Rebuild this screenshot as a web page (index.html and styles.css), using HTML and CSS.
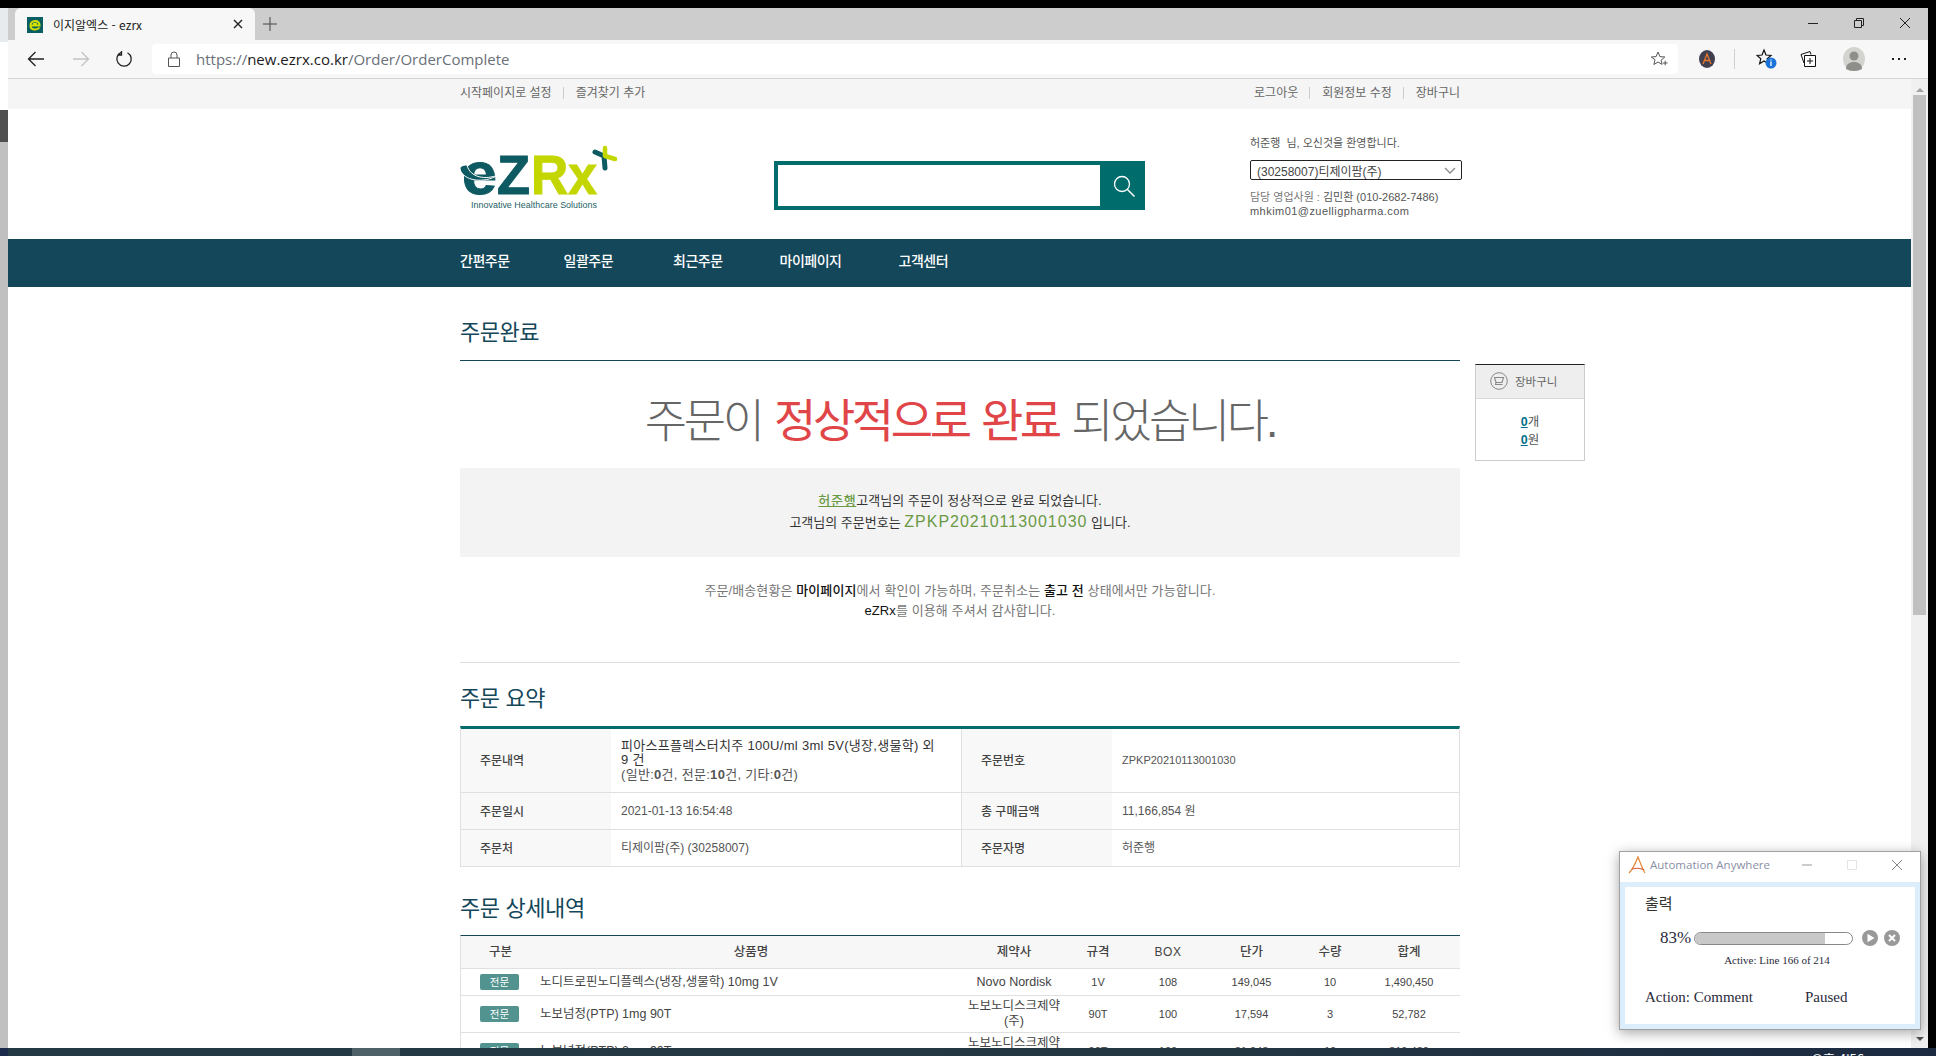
FILE: index.html
```html
<!DOCTYPE html>
<html lang="ko">
<head>
    <meta charset="UTF-8">
    <title>이지알엑스 - ezrx</title>
    <link rel="stylesheet" href="styles.css">
</head>
<body>
    <div class="screen">
        <div class="left-strip">
            <div class="strip-a"></div>
            <div class="strip-b"></div>
            <div class="strip-c"></div>
            <div class="strip-d"></div>
        </div>

        <div class="browser">
            <!-- Tabs -->
            <div class="tabbar">
                <div class="tab">
                    <svg class="favicon" width="16" height="16" viewBox="0 0 16 16">
                        <rect width="16" height="16" fill="#0b5f63"/>
                        <path d="M3 8.500h9.500C12.500 5.500 10.500 4 8 4S3.500 6 3.500 8.500 5.500 12.500 8 12.500c2 0 3.500-.7 4.500-2M6 6.800h4" fill="none" stroke="#d6e000" stroke-width="2"/>
                    </svg>
                    <span class="tab-title">이지알엑스 - ezrx</span>
                    <svg class="tab-x" width="10" height="10" viewBox="0 0 10 10">
                        <path d="M1 1l8 8M9 1l-8 8" stroke="#222" stroke-width="1.400"/>
                    </svg>
                </div>
                <svg class="tab-plus" width="14" height="14" viewBox="0 0 14 14">
                    <path d="M7 0v14M0 7h14" stroke="#444" stroke-width="1"/>
                </svg>
                <div class="win-controls">
                    <svg width="12" height="12" viewBox="0 0 12 12"><path d="M1 6.500h10" stroke="#222"/></svg>
                    <svg width="12" height="12" viewBox="0 0 12 12" fill="none"><path d="M1.500 3.500h7v7h-7zM3.500 3.500v-2h7v7h-2" stroke="#222"/></svg>
                    <svg width="12" height="12" viewBox="0 0 12 12"><path d="M1 1l10 10M11 1L1 11" stroke="#222"/></svg>
                </div>
            </div>

            <!-- Toolbar -->
            <div class="toolbar">
                <svg class="tb-back" width="18" height="16" viewBox="0 0 18 16" fill="none"><path d="M17 8H1.500M8.500 1L1.500 8l7 7" stroke="#222" stroke-width="1.300"/></svg>
                <svg class="tb-forward" width="18" height="16" viewBox="0 0 18 16" fill="none"><path d="M1 8h15.500M9.500 1l7 7-7 7" stroke="#c4c4c4" stroke-width="1.300"/></svg>
                <svg class="tb-reload" width="18" height="18" viewBox="0 0 18 18" fill="none"><path d="M6.200 2.400A7.200 7.200 0 1 0 12.500 2.700M6.500 1v4H2.600" stroke="#222" stroke-width="1.300"/></svg>
                <div class="address">
                    <svg width="12" height="16" viewBox="0 0 12 16" fill="none"><path d="M.5 7h11v8.500H.5zM3 7V4a3 3 0 0 1 6 0v3" stroke="#555" stroke-width="1"/></svg>
                    <span class="url"><span class="url-scheme">https://</span><span class="url-host">new.ezrx.co.kr</span>/Order/OrderComplete</span>
                    <svg class="addr-star" width="18" height="18" viewBox="0 0 18 18" fill="none"><path d="M8 2l1.900 4.600 4.900.4-3.700 3.200 1 4.200L8 12l-4.100 2.500 1.100-4.800L1.300 7l4.800-.4zM13 13h4.500M15.200 10.800v4.500" stroke="#555" stroke-width="1"/></svg>
                </div>
                <svg class="tb-aa" width="16" height="18" viewBox="0 0 16 18"><ellipse cx="8" cy="9" rx="8" ry="9" fill="#3f3f50"/><path d="M4 14L8 4l4 10M5.500 10.500h5" stroke="#e8762c" stroke-width="1.300" fill="none"/></svg>
                <div class="tb-sep"></div>
                <svg class="tb-fav" width="22" height="22" viewBox="0 0 22 22"><path d="M8 2l2 5 5 .4-3.800 3.300 1.200 5L8 13l-4.400 2.700 1.200-5L1 7.400 6 7z" fill="none" stroke="#111" stroke-width="1.200"/><circle cx="15" cy="15" r="5.500" fill="#1a73d9"/><path d="M15 13.500v4.500M15 11.500v1" stroke="#fff" stroke-width="1.300"/></svg>
                <svg class="tb-coll" width="18" height="18" viewBox="0 0 18 18" fill="none"><path d="M5 13L2 4.500 11 1.500l1 3" stroke="#111"/><path d="M5.500 5.500h11v11h-11zM11 8v6M8 11h6" stroke="#111" fill="#fff"/></svg>
                <svg class="tb-avatar" width="22" height="24" viewBox="0 0 22 24"><ellipse cx="11" cy="12" rx="11" ry="12" fill="#d3d3d0"/><circle cx="11" cy="9" r="4.500" fill="#8e8e8b"/><path d="M3 22c0-5 3.500-7 8-7s8 2 8 7c-2 1.300-5 2-8 2s-6-.7-8-2z" fill="#8e8e8b"/></svg>
                <div class="tb-more"><i></i><i></i><i></i></div>
            </div>

            <div class="viewport">
                <div class="page">
                    <div class="top-links">
                        <div class="wrap top-links-inner">
                            <div class="link-group">
                                <a>시작페이지로 설정</a><a>즐겨찾기 추가</a>
                            </div>
                            <div class="link-group">
                                <a>로그아웃</a><a>회원정보 수정</a><a>장바구니</a>
                            </div>
                        </div>
                    </div>

                    <header class="wrap site-header">
                        <svg class="logo" width="160" height="70" viewBox="0 0 160 70">
                            <text x="2" y="49" class="logo-e" textLength="35" lengthAdjust="spacingAndGlyphs">e</text>
                            <path d="M0 24C3 36 24 39 38 30 26 35 10 33 7 20 3 20 0 21 0 24z" fill="#0e5a62" stroke="#fff" stroke-width="1"/>
                            <text x="37" y="49" class="logo-z" textLength="33" lengthAdjust="spacingAndGlyphs">Z</text>
                            <text x="71" y="49" class="logo-rx" textLength="66" lengthAdjust="spacingAndGlyphs">Rx</text>
                            <path d="M135 7l9 4 1 12" fill="none" stroke="#0e5a62" stroke-width="5" stroke-linecap="round" stroke-linejoin="round"/>
                            <path d="M145 3v8l10 3" fill="none" stroke="#c4d600" stroke-width="4.500" stroke-linecap="round" stroke-linejoin="round"/>
                            <text x="11" y="63" class="logo-tag" textLength="126" lengthAdjust="spacingAndGlyphs">Innovative Healthcare Solutions</text>
                        </svg>
                        <form class="search">
                            <input class="search-input" type="text">
                            <button class="search-btn" type="button">
                                <svg width="24" height="24" viewBox="0 0 24 24" fill="none"><circle cx="10" cy="10" r="7.500" stroke="#fff" stroke-width="1.300"/><path d="M15.500 15.500l7 7" stroke="#fff" stroke-width="1.500"/></svg>
                            </button>
                        </form>
                        <div class="user-info">
                            <p class="welcome">허준행 &nbsp;님, 오신것을 환영합니다.</p>
                            <div class="account-select">
                                <span>(30258007)티제이팜(주)</span>
                                <svg width="12" height="7" viewBox="0 0 12 7" fill="none"><path d="M1 1l5 5 5-5" stroke="#888" stroke-width="1.300"/></svg>
                            </div>
                            <p class="rep"><b>담당 영업사원 :</b> 김민환 (010-2682-7486)</p>
                            <p class="rep-mail">mhkim01@zuelligpharma.com</p>
                        </div>
                    </header>

                    <nav class="gnb">
                        <div class="wrap gnb-inner">
                            <a>간편주문</a><a>일괄주문</a><a>최근주문</a><a>마이페이지</a><a>고객센터</a>
                        </div>
                    </nav>

                    <div class="wrap content">
                        <main class="main-col">
                            <h1 class="page-title">주문완료</h1>
                            <p class="big-msg">주문이 <em>정상적으로 완료</em> 되었습니다.</p>
                            <div class="done-box">
                                <p><a class="name-link">허준행</a>고객님의 주문이 정상적으로 완료 되었습니다.</p>
                                <p>고객님의 주문번호는 <span class="order-no">ZPKP20210113001030</span> 입니다.</p>
                            </div>
                            <div class="note">
                                <p>주문/배송현황은 <b>마이페이지</b>에서 확인이 가능하며, 주문취소는 <b>출고 전</b> 상태에서만 가능합니다.</p>
                                <p><b>eZRx</b>를 이용해 주셔서 감사합니다.</p>
                            </div>

                            <h2 class="section-title">주문 요약</h2>
                            <table class="summary">
                                <colgroup><col class="c-label"><col class="c-val"><col class="c-label"><col></colgroup>
                                <tr class="row-tall">
                                    <th>주문내역</th>
                                    <td class="order-items"><span class="dark">피아스프플렉스터치주 100U/ml 3ml 5V(냉장,생물학) 외 9&nbsp;건</span><br>(일반:<b>0</b>건, 전문:<b>10</b>건, 기타:<b>0</b>건)</td>
                                    <th>주문번호</th>
                                    <td class="code">ZPKP20210113001030</td>
                                </tr>
                                <tr>
                                    <th>주문일시</th>
                                    <td>2021-01-13 16:54:48</td>
                                    <th>총 구매금액</th>
                                    <td>11,166,854 원</td>
                                </tr>
                                <tr>
                                    <th>주문처</th>
                                    <td>티제이팜(주) (30258007)</td>
                                    <th>주문자명</th>
                                    <td>허준행</td>
                                </tr>
                            </table>

                            <h2 class="section-title detail-title">주문 상세내역</h2>
                            <table class="detail">
                                <colgroup>
                                    <col class="d1"><col class="d2"><col class="d3"><col class="d4">
                                    <col class="d5"><col class="d6"><col class="d7"><col>
                                </colgroup>
                                <tr class="detail-head">
                                    <th>구분</th><th>상품명</th><th>제약사</th><th>규격</th>
                                    <th class="box-head">BOX</th><th>단가</th><th>수량</th><th>합계</th>
                                </tr>
                                <tr class="row-one">
                                    <td><span class="badge">전문</span></td>
                                    <td class="product">노디트로핀노디플렉스(냉장,생물학) 10mg 1V</td>
                                    <td class="maker">Novo Nordisk</td><td>1V</td><td>108</td><td>149,045</td><td>10</td><td>1,490,450</td>
                                </tr>
                                <tr class="row-two">
                                    <td><span class="badge">전문</span></td>
                                    <td class="product">노보넘정(PTP) 1mg 90T</td>
                                    <td class="maker">노보노디스크제약(주)</td><td>90T</td><td>100</td><td>17,594</td><td>3</td><td>52,782</td>
                                </tr>
                                <tr class="row-two">
                                    <td><span class="badge">전문</span></td>
                                    <td class="product">노보넘정(PTP) 2mg 90T</td>
                                    <td class="maker">노보노디스크제약(주)</td><td>90T</td><td>100</td><td>31,948</td><td>10</td><td>319,480</td>
                                </tr>
                            </table>
                        </main>

                        <aside class="cart">
                            <div class="cart-head">
                                <svg width="18" height="18" viewBox="0 0 18 18" fill="none"><circle cx="9" cy="9" r="8.300" stroke="#888"/><path d="M4.500 5.500h9l-1.500 5H6zM6 10.500l-.5 2h7" stroke="#888" stroke-width="1.100"/></svg>
                                <span>장바구니</span>
                            </div>
                            <div class="cart-body">
                                <p><a>0</a>개</p>
                                <p><a>0</a>원</p>
                            </div>
                        </aside>
                    </div>
                </div>

                <div class="scrollbar">
                    <div class="sb-arrow-up"></div>
                    <div class="sb-thumb"></div>
                    <div class="sb-arrow-down"></div>
                </div>
            </div>
        </div>
    </div>

    <div class="taskbar">
        <div class="tb-corner"></div>
        <div class="tb-active"></div>
        <div class="tb-clock">오후 4:56</div>
    </div>

    <!-- Automation Anywhere window, floats over the browser -->
    <div class="aa-window">
        <div class="aa-title">
            <svg width="20" height="18" viewBox="0 0 20 18" fill="none"><path d="M1 17C5 13 8 6 10 1c2 5 4 11 7 16" stroke="#e58a3a" stroke-width="1.300"/><path d="M4 13c4-1 9-1 12 1" stroke="#e0573a" stroke-width="1.100"/></svg>
            <span class="aa-name">Automation Anywhere</span>
            <div class="aa-controls">
                <svg width="12" height="12" viewBox="0 0 12 12"><path d="M1 6h10" stroke="#999"/></svg>
                <svg width="12" height="12" viewBox="0 0 12 12" fill="none"><path d="M1.500 1.500h9v9h-9z" stroke="#e4e4e4"/></svg>
                <svg width="12" height="12" viewBox="0 0 12 12"><path d="M1 1l10 10M11 1L1 11" stroke="#888"/></svg>
            </div>
        </div>
        <div class="aa-frame">
            <div class="aa-body">
                <p class="aa-job">출력</p>
                <div class="aa-progress-row">
                    <span class="aa-pct">83%</span>
                    <div class="aa-bar"><div class="aa-fill" style="width: 83%"></div></div>
                    <svg width="16" height="16" viewBox="0 0 16 16"><circle cx="8" cy="8" r="8" fill="#999"/><path d="M5.500 3.800l7 4.200-7 4.200z" fill="#fff"/></svg>
                    <svg width="16" height="16" viewBox="0 0 16 16"><circle cx="8" cy="8" r="8" fill="#999"/><path d="M5 5l6 6M11 5l-6 6" stroke="#fff" stroke-width="2"/></svg>
                </div>
                <p class="aa-line">Active: Line 166 of 214</p>
                <div class="aa-status">
                    <span class="aa-action">Action: Comment</span>
                    <span>Paused</span>
                </div>
            </div>
        </div>
    </div>
</body>
</html>
```

FILE: styles.css
```css
html, body {
    margin: 0;
    padding: 0;
    height: 1056px;
    overflow: hidden;
    background-color: #000;
}

body {
    font-family: "Liberation Sans", "Noto Sans CJK KR", sans-serif;
    font-size: 12px;
    color: #444;
    position: relative;
}

p, h1, h2 {
    margin: 0;
    font-weight: normal;
}

.screen {
    display: flex;
    height: 1040px;
    padding: 8px 8px 0 0;
}

/* Window behind the browser, only a thin strip shows */
.left-strip {
    width: 8px;
    display: flex;
    flex-direction: column;
    flex-shrink: 0;
}

.strip-a { height: 34px; background-color: #e8ebee; }
.strip-b { height: 68px; background-color: #fff; }
.strip-c { height: 32px; background-color: #505050; }
.strip-d { flex-grow: 1; background-color: #c0c0c0; }

.browser {
    flex-grow: 1;
    min-width: 0;
    display: flex;
    flex-direction: column;
    background-color: #fff;
}

/* Tabs */
.tabbar {
    height: 32px;
    display: flex;
    align-items: center;
    background-color: #cdcdcd;
    flex-shrink: 0;
}

.tab {
    width: 240px;
    height: 32px;
    margin-left: 7px;
    padding: 0 12px;
    box-sizing: border-box;
    display: flex;
    align-items: center;
    background-color: #f7f7f7;
    border-radius: 6px 6px 0 0;
}

.favicon {
    margin-top: 1px;
}

.tab-title {
    margin-left: 10px;
    font-family: "Noto Sans CJK KR", sans-serif;
    font-size: 12px;
    color: #222;
    flex-grow: 1;
}

.tab-plus {
    margin-left: 8px;
}

.win-controls {
    margin-left: auto;
    display: flex;
    gap: 34px;
    padding: 0 17px 2px 0;
}

/* Toolbar */
.toolbar {
    height: 38px;
    display: flex;
    align-items: center;
    background-color: #f7f7f7;
    border-bottom: 1px solid #d5d5d5;
    flex-shrink: 0;
}

.tb-back { margin-left: 19px; }
.tb-forward { margin-left: 27px; }
.tb-reload { margin-left: 25px; }

.address {
    width: 1526px;
    height: 30px;
    margin-left: 19px;
    padding: 0 10px 0 16px;
    box-sizing: border-box;
    display: flex;
    align-items: center;
    background-color: #fff;
    border-radius: 4px;
}

.url {
    margin-left: 16px;
    font-family: "Open Sans", sans-serif;
    font-size: 15px;
    color: #6a7078;
    flex-grow: 1;
}

.url-host { color: #1c1c1c; }

.tb-aa { margin-left: 21px; }

.tb-sep {
    width: 1px;
    height: 20px;
    margin-left: 19px;
    background-color: #d0d0d0;
}

.tb-fav { margin-left: 21px; }
.tb-coll { margin-left: 21px; }
.tb-avatar { margin-left: 26px; }

.tb-more {
    display: flex;
    gap: 4px;
    margin-left: 27px;
}

.tb-more i {
    width: 2px;
    height: 2px;
    background-color: #222;
}

/* Page */
.viewport {
    flex-grow: 1;
    display: flex;
    min-height: 0;
    background-color: #fff;
}

.page {
    flex-grow: 1;
    min-width: 0;
    overflow: hidden;
}

.wrap {
    width: 1000px;
    margin-left: 452px;
}

.top-links {
    height: 30px;
    background-color: #f5f5f5;
}

.top-links-inner {
    height: 100%;
    padding-bottom: 2px;
    box-sizing: border-box;
    display: flex;
    justify-content: space-between;
    align-items: center;
}

.link-group {
    display: flex;
    align-items: center;
}

.link-group a {
    font-size: 12px;
    line-height: 12px;
    color: #666;
}

.link-group a + a {
    margin-left: 11px;
    padding-left: 12px;
    border-left: 1px solid #ccc;
}

.site-header {
    height: 130px;
    display: grid;
    grid-template-columns: 314px 476px 212px;
    box-sizing: border-box;
}

.logo {
    margin-top: 36px;
}

.logo-e {
    font: bold 60px "Liberation Sans", sans-serif;
    fill: #0e5a62;
    stroke: #0e5a62;
    stroke-width: 1;
}

.logo-z {
    font: bold 56px "Liberation Sans", sans-serif;
    fill: #0e5a62;
    stroke: #0e5a62;
    stroke-width: 1;
}

.logo-rx {
    font: bold 56px "Liberation Sans", sans-serif;
    fill: #c4d600;
    stroke: #c4d600;
    stroke-width: 1;
}

.logo-tag {
    font: 9px "Liberation Sans", sans-serif;
    fill: #1f5f66;
}

.search {
    width: 371px;
    height: 49px;
    margin-top: 52px;
    box-sizing: border-box;
    display: flex;
    border: 4px solid #006c6c;
}

.search-input {
    flex-grow: 1;
    min-width: 0;
    border: 0;
    padding: 0;
    background-color: #fff;
}

.search-btn {
    width: 41px;
    padding: 0 0 0 6px;
    border: 0;
    display: flex;
    align-items: center;
    justify-content: center;
    background-color: #006c6c;
}

.user-info {
    padding-top: 26px;
    font-size: 11px;
    color: #555;
}

.welcome {
    line-height: 16px;
}

.account-select {
    height: 20px;
    margin-top: 9px;
    padding: 0 5px 0 6px;
    box-sizing: border-box;
    display: flex;
    align-items: center;
    justify-content: space-between;
    border: 1px solid #222;
    border-radius: 2px;
    font-size: 12px;
    color: #444;
}

.rep {
    margin-top: 10px;
    line-height: 14px;
}

.rep b {
    color: #777;
    font-weight: normal;
}

.rep-mail {
    line-height: 14px;
    letter-spacing: 0.450px;
}

/* Menu */
.gnb {
    height: 48px;
    background-color: #14475a;
}

.gnb-inner {
    height: 100%;
    padding-bottom: 7px;
    box-sizing: border-box;
    display: flex;
    align-items: center;
    gap: 57px;
}

.gnb a {
    font-size: 14px;
    font-weight: 500;
    color: #fff;
    letter-spacing: -0.500px;
}

.gnb a:nth-child(2) {
    margin: 0 3px 0 -3px;
}

/* Content */
.content {
    display: flex;
    align-items: flex-start;
    width: 1125px;
}

.main-col {
    width: 1000px;
    flex-shrink: 0;
}

.page-title {
    padding: 31px 0 12px;
    font-size: 22px;
    line-height: 30px;
    letter-spacing: -0.500px;
    color: #14475a;
    border-bottom: 1px solid #14475a;
}

.big-msg {
    padding: 31px 0 18px;
    font-size: 46px;
    line-height: 58px;
    letter-spacing: -3.400px;
    word-spacing: 3px;
    font-weight: 300;
    color: #666;
    text-align: center;
}

.big-msg em {
    font-style: normal;
    font-weight: 400;
    color: #e04548;
}

.done-box {
    height: 89px;
    padding-top: 22px;
    box-sizing: border-box;
    background-color: #f3f3f3;
    text-align: center;
    font-size: 13px;
    line-height: 21px;
    color: #333;
}

.name-link {
    color: #6a9a45;
    font-weight: 500;
    letter-spacing: 0.700px;
    text-decoration: underline;
}

.order-no {
    font-family: "Liberation Sans", sans-serif;
    font-size: 16px;
    letter-spacing: 1px;
    color: #6a9a45;
}

.note {
    margin-top: 24px;
    padding-bottom: 41px;
    border-bottom: 1px solid #ddd;
    text-align: center;
    font-size: 13px;
    letter-spacing: 0.100px;
    line-height: 20px;
    color: #777;
}

.note b {
    font-weight: 500;
    color: #111;
}

.section-title {
    padding: 21px 0 12px;
    font-size: 22px;
    line-height: 30px;
    letter-spacing: -0.400px;
    color: #14475a;
}

.detail-title {
    padding: 27px 0 11px;
}

/* Summary table */
.summary {
    width: 1000px;
    table-layout: fixed;
    border-collapse: separate;
    border-spacing: 0;
    border-top: 3px solid #006c6c;
    border-left: 1px solid #e0e0e0;
    border-right: 1px solid #e0e0e0;
    font-size: 12px;
}

.c-label { width: 150px; }
.c-val { width: 351px; }

.summary th {
    height: 37px;
    padding: 0 0 2px 19px;
    box-sizing: border-box;
    text-align: left;
    font-weight: 500;
    color: #444;
    background-color: #f8f8f8;
    border-bottom: 1px solid #e0e0e0;
}

.summary td {
    padding: 0 6px 0 10px;
    color: #555;
    border-bottom: 1px solid #e0e0e0;
    line-height: 15px;
}

.summary td:nth-child(2) {
    border-right: 1px solid #e0e0e0;
}

.summary .row-tall th {
    height: 64px;
}

.summary .order-items {
    font-size: 13px;
    letter-spacing: 0.300px;
    line-height: 14.500px;
}

.summary .code {
    font-size: 11px;
}

.dark {
    color: #333;
}

.summary b {
    font-weight: 700;
}

/* Detail table */
.detail {
    width: 1000px;
    table-layout: fixed;
    border-collapse: separate;
    border-spacing: 0;
    border-top: 1px solid #14475a;
    border-left: 1px solid #e0e0e0;
    font-size: 11px;
    color: #444;
    text-align: center;
}

.d1 { width: 79px; }
.d2 { width: 422px; }
.d3 { width: 104px; }
.d4 { width: 64px; }
.d5 { width: 76px; }
.d6 { width: 91px; }
.d7 { width: 66px; }

.detail th {
    font-size: 12.500px;
    font-weight: 500;
    background-color: #f7f7f7;
}

.detail .box-head {
    font-size: 12px;
    letter-spacing: 0.500px;
}

.detail th, .detail td {
    padding: 0;
    border-bottom: 1px solid #e0e0e0;
    line-height: 15px;
}

.detail th:last-child, .detail td:last-child {
    padding-right: 5px;
}

.detail-head th {
    height: 32px;
}

.row-one td {
    height: 26px;
}

.row-two td {
    height: 36px;
}

.detail .product {
    font-size: 12.500px;
    text-align: left;
}

.detail .maker {
    font-size: 12.500px;
}

.badge {
    display: block;
    width: 39px;
    height: 16px;
    margin-left: 19px;
    border-radius: 2px;
    background-color: #52938f;
    color: #fff;
    font-size: 10.500px;
    line-height: 16px;
}

/* Cart */
.cart {
    width: 110px;
    margin: 77px 0 0 15px;
    box-sizing: border-box;
    border: 1px solid #ccc;
    border-top-color: #222;
    flex-shrink: 0;
}

.cart-head {
    height: 31px;
    padding: 0 0 2px 14px;
    display: flex;
    align-items: center;
    gap: 7px;
    background-color: #eee;
    border-bottom: 1px solid #d8d8d8;
    font-size: 11.500px;
    color: #666;
}

.cart-body {
    height: 61px;
    padding-top: 14px;
    box-sizing: border-box;
    text-align: center;
    font-size: 12.500px;
    line-height: 18px;
    color: #555;
}

.cart-body a {
    color: #00708a;
    font-weight: 700;
    text-decoration: underline;
}

/* Scrollbar */
.scrollbar {
    width: 17px;
    flex-shrink: 0;
    display: flex;
    flex-direction: column;
    align-items: center;
    background-color: #f0f0f0;
}

.sb-arrow-up {
    margin-top: 9px;
    border-left: 4px solid transparent;
    border-right: 4px solid transparent;
    border-bottom: 4px solid #a0a0a0;
}

.sb-thumb {
    width: 13px;
    height: 520px;
    margin-top: 3px;
    background-color: #c0c0c0;
}

.sb-arrow-down {
    margin-top: auto;
    margin-bottom: 7px;
    border-left: 4px solid transparent;
    border-right: 4px solid transparent;
    border-top: 4px solid #505050;
}

/* Taskbar */
.taskbar {
    height: 8px;
    display: flex;
    overflow: hidden;
    background: linear-gradient(90deg, #233a44 0%, #233742 60%, #1c2a41 100%);
}

.tb-corner {
    width: 8px;
    background-color: #1b2a4a;
}

.tb-active {
    width: 48px;
    margin-left: 344px;
    background-color: #4f6168;
}

.tb-clock {
    margin-left: auto;
    margin-right: 72px;
    padding-top: 3px;
    font-family: "Noto Sans CJK KR", sans-serif;
    font-size: 13px;
    line-height: 16px;
    color: #fff;
}

/* Automation Anywhere window */
.aa-window {
    position: absolute;
    left: 1619px;
    top: 851px;
    width: 302px;
    height: 179px;
    box-sizing: border-box;
    display: flex;
    flex-direction: column;
    background-color: #fff;
    border: 1px solid #a0a0a0;
    box-shadow: 0 3px 12px rgba(0, 0, 0, 0.35);
}

.aa-title {
    height: 30px;
    padding: 0 0 5px 8px;
    box-sizing: border-box;
    display: flex;
    align-items: center;
    flex-shrink: 0;
}

.aa-name {
    margin-left: 2px;
    font-family: "Open Sans", sans-serif;
    font-size: 11.500px;
    color: #8a8fa5;
}

.aa-controls {
    margin-left: auto;
    padding-right: 17px;
    display: flex;
    gap: 33px;
}

.aa-frame {
    flex-grow: 1;
    padding: 5px;
    background-color: #dcedfb;
}

.aa-body {
    height: 100%;
    box-sizing: border-box;
    padding: 6px 0 0 20px;
    background-color: #fff;
    font-family: "Liberation Serif", "Noto Sans CJK KR", serif;
    color: #2a2a3a;
}

.aa-job {
    font-family: "Noto Sans CJK KR", sans-serif;
    font-size: 15px;
    line-height: 20px;
    color: #333;
}

.aa-progress-row {
    margin-top: 15px;
    display: flex;
    align-items: center;
}

.aa-pct {
    width: 30px;
    margin-left: 15px;
    font-size: 17px;
    line-height: 20px;
}

.aa-bar {
    width: 157px;
    height: 11px;
    margin: 0 9px 0 4px;
    overflow: hidden;
    border: 1px solid #888;
    border-radius: 7px;
    background-color: #fff;
}

.aa-fill {
    height: 100%;
    background-color: #c8c8c8;
}

.aa-progress-row svg + svg {
    margin-left: 6px;
}

.aa-line {
    margin: 5px 0 0 -6px;
    text-align: center;
    font-size: 11px;
    line-height: 14px;
}

.aa-status {
    margin-top: 21px;
    display: flex;
    font-size: 15px;
    line-height: 18px;
}

.aa-action {
    width: 160px;
}
```
